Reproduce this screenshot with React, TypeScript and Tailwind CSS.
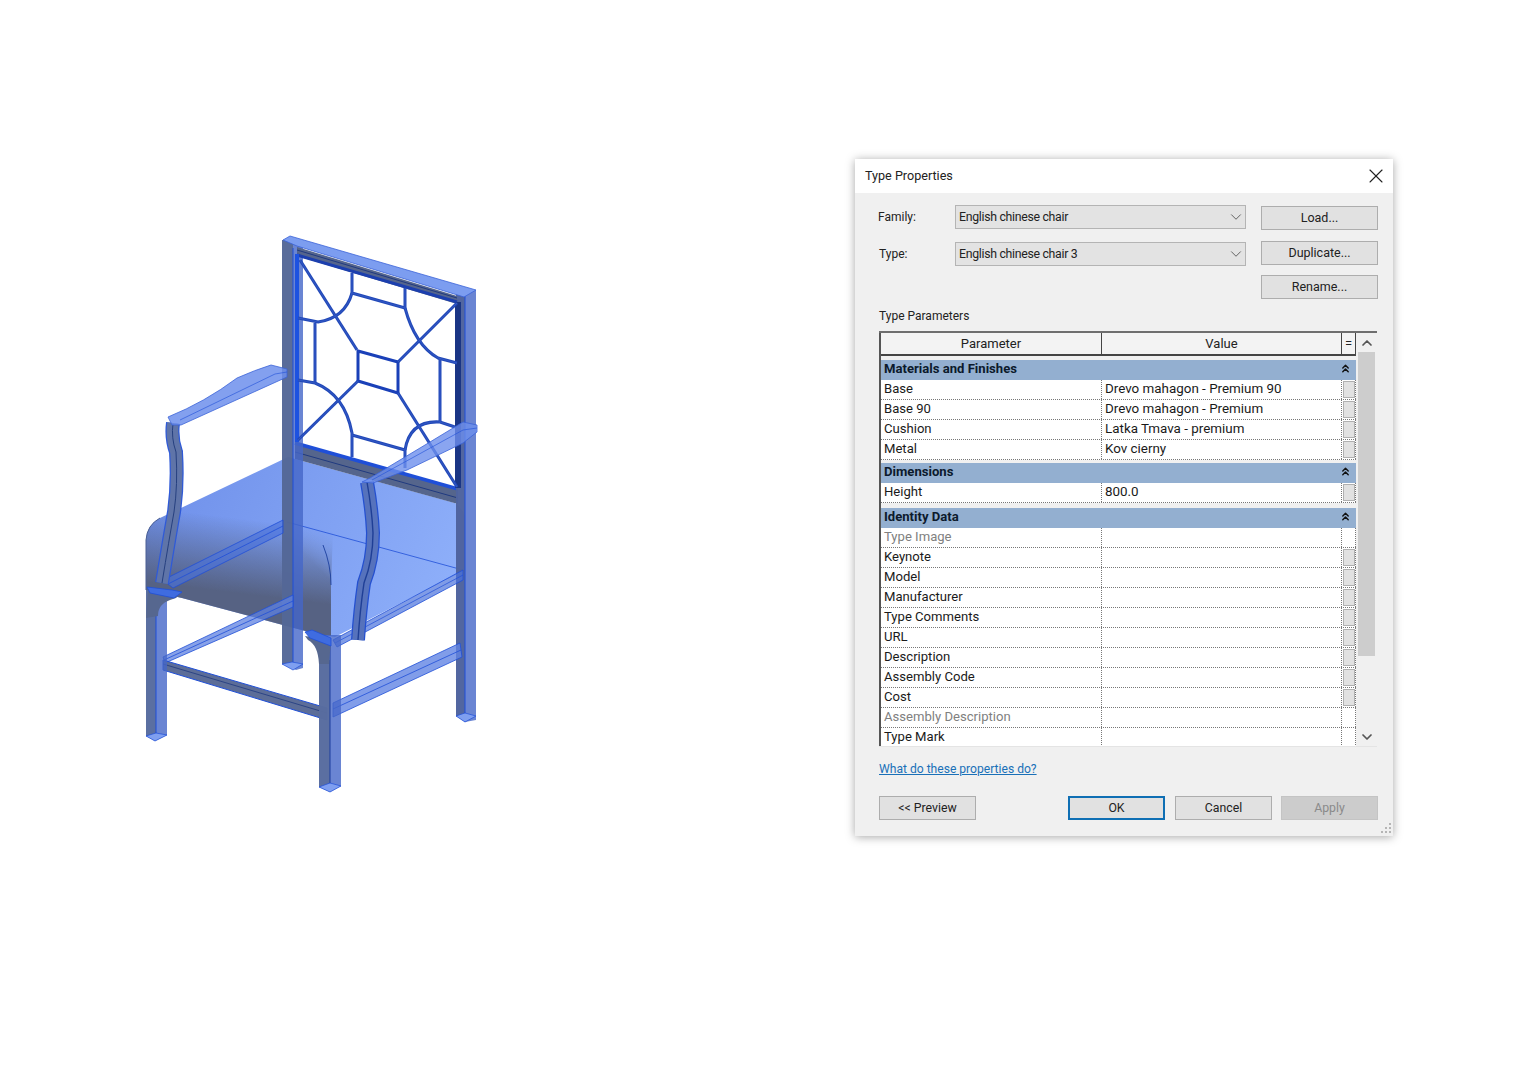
import React from 'react';
import { ChevronDown, ChevronUp, ChevronsUp, X } from 'lucide-react';

const FONT = "font-['Roboto','Noto_Sans',sans-serif]";

interface Row {
  name: string;
  value?: string;
  muted?: boolean;
  noButton?: boolean;
}

const materials: Row[] = [
  { name: 'Base', value: 'Drevo mahagon - Premium 90' },
  { name: 'Base 90', value: 'Drevo mahagon - Premium' },
  { name: 'Cushion', value: 'Latka Tmava - premium' },
  { name: 'Metal', value: 'Kov cierny' },
];

const identity: Row[] = [
  { name: 'Type Image', muted: true, noButton: true },
  { name: 'Keynote' },
  { name: 'Model' },
  { name: 'Manufacturer' },
  { name: 'Type Comments' },
  { name: 'URL' },
  { name: 'Description' },
  { name: 'Assembly Code' },
  { name: 'Cost' },
  { name: 'Assembly Description', muted: true, noButton: true },
  { name: 'Type Mark', noButton: true },
];

const Chair: React.FC = () => {
  const blue = '#1f4fd8';
  const lattice = [
    'M300 260L357 350', 'M398 362L457 303', 'M358 381L298 440', 'M398 393L457 487',
    'M352 273V293L405 308V288', 'M352 293Q345 318 318 322L298 318', 'M315 323V382',
    'M298 380L315 383Q345 395 352 433V457', 'M352 435L405 450V468',
    'M405 308Q415 345 438 358L457 363', 'M440 358V422', 'M405 450Q410 420 440 422L455 427',
  ];
  const leftArmPost = 'M173 423Q171 438 176 452Q178 485 174 512Q169 540 162 583';
  const rightArmPost = 'M367 482Q372 510 373 533Q373 560 364 583Q360 610 358 640';
  return (
    <svg className="shrink-0 mt-[225px] ml-[130px]" width="360" height="580" viewBox="130 225 360 580" fill="none">
      <defs>
        <linearGradient id="seatShade" x1="235" y1="518" x2="225" y2="600" gradientUnits="userSpaceOnUse">
          <stop offset="0" stopColor="#4d5a7c" stopOpacity="0" />
          <stop offset="0.9" stopColor="#566283" stopOpacity="1" />
        </linearGradient>
        <linearGradient id="seatTop" x1="160" y1="460" x2="460" y2="600" gradientUnits="userSpaceOnUse">
          <stop offset="0" stopColor="#6f90ea" />
          <stop offset="1" stopColor="#8fb0fa" />
        </linearGradient>
        <linearGradient id="seatFade" x1="200" y1="450" x2="227.5" y2="422.5" gradientUnits="userSpaceOnUse">
          <stop offset="0" stopColor="#fff" />
          <stop offset="1" stopColor="#000" />
        </linearGradient>
        <mask id="seatMask" maskUnits="userSpaceOnUse" x="130" y="480" width="230" height="170">
          <rect x="130" y="480" width="230" height="170" fill="url(#seatFade)" />
        </mask>
      </defs>

      {/* seat */}
      <path d="M288 457L455 503Q465 510 465 520V570L335 637L320 635L182 598L146 590V540Q147 525 160 518Z" fill="url(#seatTop)" />
      <path d="M146 540Q147 525 160 518L190 503L334 503L331 585V636L320 635L182 598L146 590Z" fill="url(#seatShade)" mask="url(#seatMask)" />
      <path d="M287 522L463 570" stroke={blue} strokeWidth="0.8" />
      <path d="M323 545Q331 565 331 585" stroke="#1c3f9e" strokeWidth="0.9" />
      <path d="M146 590V540Q147 525 160 518" stroke="#4a5f94" strokeWidth="1" />

      {/* back rail at seat */}
      <path d="M295 442L458 488V504L295 459Z" fill="#55658c" />
      <path d="M295 452L458 498" stroke="#203a80" strokeWidth="1" />
      <path d="M295 443L458 489" stroke={blue} strokeWidth="3.5" />

      {/* back posts and top rail */}
      <path d="M282 240L303 244V668L296 670L282 664Z" fill="#4567c8" fillOpacity="0.8" />
      <path d="M282 240H293V666L282 664Z" fill="#56678f" fillOpacity="0.85" />
      <path d="M293 248V668" stroke={blue} strokeWidth="1" />
      <path d="M282 664L292 662L303 664L293 670Z" fill="#7f9ff0" stroke={blue} strokeWidth="0.7" />
      <path d="M456 292L476 290V720L465 722L456 716Z" fill="#4567c8" fillOpacity="0.8" />
      <path d="M456 292H465V720L456 716Z" fill="#50639a" fillOpacity="0.9" />
      <path d="M465 296V722" stroke={blue} strokeWidth="1" />
      <path d="M456 716L465 713L476 716L465 722Z" fill="#7f9ff0" stroke={blue} strokeWidth="0.7" />
      <path d="M290 236L476 290L464 297L297 246L283 240Z" fill="#7c9df0" stroke="#3b63d8" strokeWidth="0.8" />
      <path d="M297 247L457 296V304L297 256Z" fill="#55658c" />
      <path d="M297 250L457 298" stroke="#203a80" strokeWidth="1" />
      <path d="M297 255L457 302" stroke="#1c3fae" strokeWidth="3" />
      <path d="M297 254V442" stroke="#1d52e0" strokeWidth="4" />
      <path d="M458 302V488" stroke="#1a3585" strokeWidth="6" />

      {/* lattice */}
      <path d="M358 351L398 362V393L358 381Z" stroke="#1a40b8" strokeWidth="3" strokeLinejoin="round" />
      {lattice.map((d) => (
        <path key={d} d={d} stroke="#2148b8" strokeWidth="3" />
      ))}
      {lattice.map((d) => (
        <path key={`${d}-c`} d={d} stroke="#3a5fc8" strokeWidth="0.7" />
      ))}

      {/* seat rails */}
      <path d="M163 580L283 520V533L173 588Z" fill="#4a72dc" fillOpacity="0.65" stroke={blue} strokeWidth="0.8" />
      <path d="M168 584L283 526" stroke={blue} strokeWidth="0.8" />
      <path d="M333 640L463 570L463 580L337 647Z" fill="#4a72dc" fillOpacity="0.7" stroke={blue} strokeWidth="0.8" />
      <path d="M335 643L463 575" stroke={blue} strokeWidth="0.7" />
      <path d="M163 657L293 595V607L165 663Z" fill="#5f82e0" fillOpacity="0.75" stroke={blue} strokeWidth="0.8" />
      <path d="M164 660L293 601" stroke={blue} strokeWidth="0.8" />
      <path d="M163 660L327 708V720L163 670Z" fill="#5c6d98" stroke={blue} strokeWidth="1" />
      <path d="M163 664L327 713" stroke="#203a80" strokeWidth="0.8" />
      <path d="M333 703L460 643L462 657L333 717Z" fill="#6285e4" fillOpacity="0.8" stroke={blue} strokeWidth="0.8" />
      <path d="M333 709L461 650" stroke={blue} strokeWidth="0.8" />

      {/* front legs */}
      <path d="M146 590H167V735L155 741L146 736Z" fill="#4567c8" fillOpacity="0.8" />
      <path d="M146 590H156V738L146 736Z" fill="#5a6d9b" fillOpacity="0.9" />
      <path d="M156 600V740" stroke={blue} strokeWidth="1" />
      <path d="M146 736L156 733L167 735L155 741Z" fill="#7f9ff0" stroke={blue} strokeWidth="0.7" />
      <path d="M148 588L182 592L176 598L170 600Q158 604 158 616L146 618Z" fill="#56678f" />
      <path d="M147 587L172 590L182 592L174 598L150 593Z" fill="#3f6ce0" stroke={blue} strokeWidth="0.8" />
      <path d="M319 635H341V786L330 792L319 787Z" fill="#4567c8" fillOpacity="0.8" />
      <path d="M319 660H330V790L319 787Z" fill="#5a6d9b" fillOpacity="0.9" />
      <path d="M330 640V790" stroke="#1c3f9e" strokeWidth="1" />
      <path d="M319 787L330 783L341 786L330 792Z" fill="#7f9ff0" stroke={blue} strokeWidth="0.7" />
      <path d="M305 636L331 640L329 664L319 664Q318 645 308 640Z" fill="#56678f" />
      <path d="M305 632L312 630L331 638L331 646L310 638Z" fill="#3f6ce0" stroke={blue} strokeWidth="0.8" />

      {/* arms */}
      <path d={leftArmPost} stroke="#2f5ad8" strokeWidth="14" />
      <path d={leftArmPost} stroke="#5f74a8" strokeWidth="11.5" />
      <path d={leftArmPost} stroke="#26407f" strokeWidth="1" />
      <path d="M168 417Q205 402 237 378Q255 370 271 365L287 369V377L181 425L172 425Z" fill="#6d8fec" fillOpacity="0.85" stroke="#3b63d8" strokeWidth="0.8" />
      <path d="M180 420L275 374L287 372" stroke={blue} strokeWidth="0.6" />
      <path d={rightArmPost} stroke="#2450d0" strokeWidth="14" />
      <path d={rightArmPost} stroke="#5672bc" strokeWidth="11.5" />
      <path d={rightArmPost} stroke="#1f3f96" strokeWidth="1.4" />
      <path d="M370 478L430 442L463 422L477 425V432L463 443L407 470L373 483L362 482Z" fill="#6d8fec" fillOpacity="0.8" stroke="#3b63d8" strokeWidth="0.8" />
      <path d="M372 480L463 430L477 428" stroke={blue} strokeWidth="0.6" />
    </svg>
  );
};

const buttonTones = {
  plain: 'bg-[#e1e1e1] border border-[#adadad] text-[#222]',
  primary: 'bg-[#e1e1e1] border-2 border-[#0f6fb4] text-[#222]',
  disabled: 'bg-[#cccccc] border border-[#c4c4c4] text-[#8a8a8a]',
};

const ActionButton: React.FC<{ label: string; tone?: keyof typeof buttonTones; className?: string }> = ({
  label,
  tone = 'plain',
  className = '',
}) => (
  <div className={`w-[97px] h-6 flex items-center justify-center text-[12.3px] ${buttonTones[tone]} ${className}`}>
    {label}
  </div>
);

const SideButton: React.FC<{ label: string; className?: string }> = ({ label, className = '' }) => (
  <div className={`w-[117px] h-6 flex items-center justify-center bg-[#e1e1e1] border border-[#adadad] text-[12.5px] text-[#222] ${className}`}>
    {label}
  </div>
);

const SelectBox: React.FC<{ value: string }> = ({ value }) => (
  <div className="w-[291px] h-6 flex items-center justify-between pl-[3px] bg-[#e3e3e3] border border-[#b4b4b4] text-[12.3px] tracking-[-0.3px] text-[#222]">
    <span className="mt-[1px]">{value}</span>
    <ChevronDown size={18} strokeWidth={1.2} className="text-[#555]" />
  </div>
);

const GroupRow: React.FC<{ title: string; className?: string }> = ({ title, className = '' }) => (
  <div className={`h-5 flex items-center justify-between pl-[3px] pr-[4px] bg-[#93afd0] font-bold text-[13.1px] text-[#0c1a2c] ${className}`}>
    <span className="-mt-[2px]">{title}</span>
    <ChevronsUp size={13} strokeWidth={2.6} className="-mt-[3px] text-[#111]" />
  </div>
);

const ParamRow: React.FC<{ row: Row }> = ({ row }) => (
  <div className="h-5 flex text-[13.1px] leading-[18px] bg-white border-b border-dotted border-[#777]">
    <div className={`w-[221px] pl-[3px] border-r border-dotted border-[#777] ${row.muted ? 'text-[#808080]' : 'text-[#1a1a1a]'}`}>
      {row.name}
    </div>
    <div className="w-[240px] pl-[3px] text-[13.4px] border-r border-dotted border-[#777] text-[#1a1a1a]">{row.value}</div>
    <div className="w-[14px] border-r border-dotted border-[#777] flex items-center justify-center">
      {!row.noButton && <div className="w-[12px] h-[17px] bg-[#e1e1e1] border border-[#b0b0b0]" />}
    </div>
  </div>
);

const ParamsTable: React.FC = () => (
  <div className="w-[498px] h-[416px] flex overflow-hidden border-t-2 border-b border-[#6e6e6e] border-b-[#e4e4e4]">
    <div className="w-[477px] border-l-2 border-[#555] bg-[#f0f0f0]">
      <div className="h-[23px] flex items-center text-[13px] text-[#222] border-b-2 border-[#444] bg-[#f3f3f3]">
        <div className="w-[221px] h-full flex items-center justify-center border-r border-[#444]">Parameter</div>
        <div className="w-[240px] h-full flex items-center justify-center border-r border-[#444]">Value</div>
        <div className="w-[14px] h-full flex items-center justify-center border-r border-[#444]">=</div>
      </div>
      <GroupRow title="Materials and Finishes" className="mt-[4px]" />
      {materials.map((row) => <ParamRow key={row.name} row={row} />)}
      <GroupRow title="Dimensions" className="mt-[3px]" />
      <ParamRow row={{ name: 'Height', value: '800.0' }} />
      <GroupRow title="Identity Data" className="mt-[5px]" />
      {identity.map((row) => <ParamRow key={row.name} row={row} />)}
    </div>
    <div className="w-[21px] flex flex-col items-center bg-[#f0f0f0]">
      <ChevronUp size={16} strokeWidth={2.6} className="text-[#555] mt-[2px] mb-[1px] shrink-0" />
      <div className="w-[17px] h-[304px] bg-[#cdcdcd]" />
      <div className="flex-1" />
      <ChevronDown size={16} strokeWidth={2.6} className="text-[#555] mb-[1px] shrink-0" />
    </div>
  </div>
);

const TypeDialog: React.FC = () => (
  <div className={`relative shrink-0 mt-[159px] ml-[365px] w-[538px] h-[677px] bg-[#f0f0f0] shadow-[0_1px_9px_rgba(0,0,0,0.35)] ${FONT}`}>
    <div className="h-[34px] bg-white flex items-center justify-between pl-[10px] pr-[5px] text-[12.6px] text-[#222]">
      <span>Type Properties</span>
      <X size={24} strokeWidth={1.1} className="text-[#222]" />
    </div>

    <div className="pl-[24px] pr-[15px] pt-[12px]">
      <div className="flex items-start gap-[15px]">
        <div className="flex items-center w-[367px]">
          <span className="w-[76px] -ml-[1px] mr-[1px] text-[12px] text-[#222]">Family:</span>
          <SelectBox value="English chinese chair" />
        </div>
        <SideButton label="Load..." className="mt-[1px]" />
      </div>
      <div className="flex items-start gap-[15px] mt-[12px]">
        <div className="flex items-center w-[367px]">
          <span className="w-[76px] text-[12px] text-[#222]">Type:</span>
          <SelectBox value="English chinese chair 3" />
        </div>
        <SideButton label="Duplicate..." className="-mt-[1px]" />
      </div>
      <div className="flex justify-end mt-[9px]">
        <SideButton label="Rename..." />
      </div>
      <div className="mt-[8px] mb-[6px] h-[18px] text-[12px] text-[#222]">Type Parameters</div>
      <ParamsTable />
      <div className="mt-[13px] h-[18px] text-[12.1px] text-[#1a70b8] underline">What do these properties do?</div>
      <div className="flex mt-[18px]">
        <ActionButton label="<< Preview" />
        <ActionButton label="OK" tone="primary" className="ml-[92px]" />
        <ActionButton label="Cancel" className="ml-[10px]" />
        <ActionButton label="Apply" tone="disabled" className="ml-[9px]" />
      </div>
    </div>

    <svg className="absolute right-[1px] bottom-[2px]" width="11" height="11" viewBox="0 0 11 11" fill="#b5b5b5">
      <rect x="8" y="0" width="2" height="2" />
      <rect x="4" y="4" width="2" height="2" />
      <rect x="8" y="4" width="2" height="2" />
      <rect x="0" y="8" width="2" height="2" />
      <rect x="4" y="8" width="2" height="2" />
      <rect x="8" y="8" width="2" height="2" />
    </svg>
  </div>
);

export default function App() {
  return (
    <div className="w-[1518px] h-[1080px] bg-white flex items-start overflow-hidden">
      <Chair />
      <TypeDialog />
    </div>
  );
}
